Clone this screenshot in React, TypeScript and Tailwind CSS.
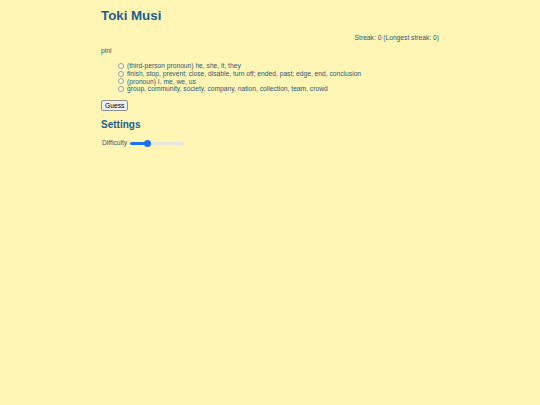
import React, { useState } from 'react';

const answers = [
  '(third-person pronoun) he, she, it, they',
  'finish, stop, prevent; close, disable, turn off; ended, past; edge, end, conclusion',
  '(pronoun) I, me, we, us',
  'group, community, society, company, nation, collection, team, crowd',
];

export default function App() {
  const [choice, setChoice] = useState<number | null>(null);
  const [difficulty, setDifficulty] = useState(30);

  return (
    <div className="min-h-[405px] bg-[#fff5b5] text-[#2a5878] font-['Liberation_Sans',Arial,sans-serif] text-[6.7px] leading-[8px]">
      <div className="w-[338px] mx-auto pt-[8px]">
        {/* Header */}
        <h1 className="text-[13.3px] leading-[16px] font-bold text-[#1d5e8e]">Toki Musi</h1>
        <div className="text-right mt-[9.5px]">Streak: 0 (Longest streak: 0)</div>

        {/* Question */}
        <div className="mt-[5.5px]">pini</div>
        <ul className="mt-[7px] pl-[17px] flex flex-col">
          {answers.map((a, i) => (
            <li key={i} className="flex items-center h-[7.8px]">
              <input
                type="radio"
                name="answer"
                checked={choice === i}
                onChange={() => setChoice(i)}
                className="w-[6px] h-[6px] m-0 mr-[3px] shrink-0 opacity-70"
              />
              <span>{a}</span>
            </li>
          ))}
        </ul>
        <button className="mt-[7px] h-[11px] px-[3px] text-[6.7px] leading-[7px] text-black bg-[#efefef] border border-[#8f8f8f] rounded-[2px]">
          Guess
        </button>

        {/* Settings */}
        <h2 className="mt-[8px] text-[10px] leading-[12px] font-bold text-[#1d5e8e]">Settings</h2>
        <div className="mt-[8px] flex items-center gap-[3px]">
          <label className="pl-[1px]">Difficulty</label>
          <input
            type="range"
            min={0}
            max={100}
            value={difficulty}
            onChange={(e) => setDifficulty(Number(e.target.value))}
            className="w-[54px] appearance-none [&::-webkit-slider-thumb]:appearance-none [&::-webkit-slider-thumb]:w-[7px] [&::-webkit-slider-thumb]:h-[7px] [&::-webkit-slider-thumb]:rounded-full [&::-webkit-slider-thumb]:bg-[#1a73e8]"
            style={{
              background: `linear-gradient(to right, #1a73e8 ${difficulty}%, #e8e6dc ${difficulty}%)`,
              borderRadius: 9999,
              height: 3,
            }}
          />
        </div>
      </div>
    </div>
  );
}
